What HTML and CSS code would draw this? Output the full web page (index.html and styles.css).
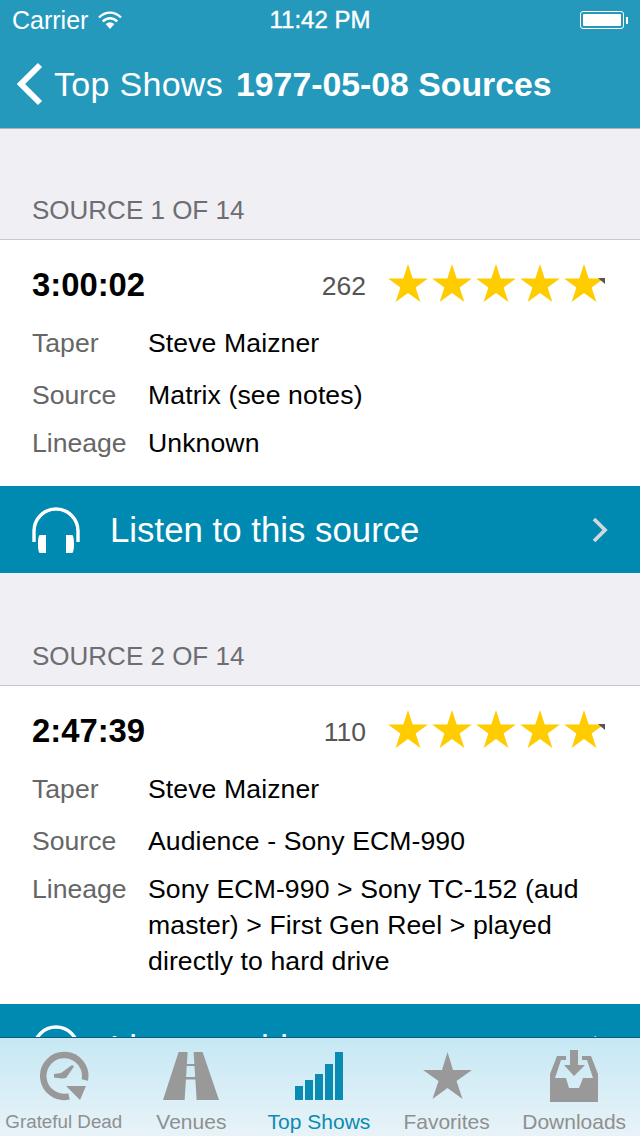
FILE: index.html
```html
<!DOCTYPE html>
<html lang="en">

<head>
    <meta charset="UTF-8">
    <title>1977-05-08 Sources</title>
    <link rel="stylesheet" href="styles.css">
</head>

<body>
    <svg class="defs" width="0" height="0">
        <defs>
            <symbol id="star" viewBox="0 0 40 38">
                <polygon points="20,0 24.7,14.5 40,14.5 27.6,23.5 32.4,38 20,29 7.6,38 12.4,23.5 0,14.5 15.3,14.5" />
            </symbol>
            <symbol id="headphones" viewBox="0 0 48 48">
                <path d="M2 36V25a22 22 0 0 1 44 0v11" fill="none" stroke="#fff" stroke-width="3.4" />
                <path d="M8 29h6v18H8C6.500 47 6 42 6 38S6.500 29 8 29zM40 29h-6v18h6c1.500 0 2-5 2-9S41.500 29 40 29z" fill="#fff" />
            </symbol>
            <symbol id="chevron" viewBox="0 0 16 26">
                <path d="M2 2l11 11L2 24" fill="none" stroke="#cfd8de" stroke-width="3.800" />
            </symbol>
        </defs>
    </svg>

    <header class="topbar">
        <div class="status">
            <div class="status-left">
                <span>Carrier</span>
                <svg class="wifi" viewBox="0 0 24 18" width="24" height="18">
                    <path d="M1 6.500C7.500 0 16.500 0 23 6.500M4.800 10.500c4.300-4.300 10.100-4.300 14.400 0M8.500 14c2.200-2 4.800-2 7 0" fill="none" stroke="#fff" stroke-width="2.400" />
                    <path d="M12 18l-3-3.500c1.800-1.300 4.200-1.300 6 0z" fill="#fff" />
                </svg>
            </div>
            <div class="status-time">11:42 PM</div>
            <div class="status-right">
                <div class="battery"><div class="battery-fill"></div></div>
                <div class="battery-tip"></div>
            </div>
        </div>
        <div class="navbar">
            <svg class="back" viewBox="0 0 27 44" width="27" height="44">
                <path d="M24 3L5 22l19 19" fill="none" stroke="#fff" stroke-width="6" />
            </svg>
            <span class="back-label">Top Shows</span>
            <span class="nav-title">1977-05-08 Sources</span>
        </div>
    </header>

    <main>
        <h2 class="section-title section-first">SOURCE 1 OF 14</h2>
        <section class="card">
            <div class="summary">
                <div class="duration">3:00:02</div>
                <div class="reviews">262</div>
                <div class="stars">
                    <svg class="star"><use href="#star" /></svg>
                    <svg class="star"><use href="#star" /></svg>
                    <svg class="star"><use href="#star" /></svg>
                    <svg class="star"><use href="#star" /></svg>
                    <svg class="star"><use href="#star" /></svg>
                    <div class="star-rest"></div>
                </div>
            </div>
            <div class="info"><div class="label">Taper</div><div class="value">Steve Maizner</div></div>
            <div class="info info-source"><div class="label">Source</div><div class="value">Matrix (see notes)</div></div>
            <div class="info info-lineage"><div class="label">Lineage</div><div class="value">Unknown</div></div>
        </section>
        <div class="listen">
            <svg class="headphones"><use href="#headphones" /></svg>
            <span class="listen-text">Listen to this source</span>
            <svg class="chevron"><use href="#chevron" /></svg>
        </div>

        <h2 class="section-title">SOURCE 2 OF 14</h2>
        <section class="card">
            <div class="summary">
                <div class="duration">2:47:39</div>
                <div class="reviews">110</div>
                <div class="stars">
                    <svg class="star"><use href="#star" /></svg>
                    <svg class="star"><use href="#star" /></svg>
                    <svg class="star"><use href="#star" /></svg>
                    <svg class="star"><use href="#star" /></svg>
                    <svg class="star"><use href="#star" /></svg>
                    <div class="star-rest"></div>
                </div>
            </div>
            <div class="info"><div class="label">Taper</div><div class="value">Steve Maizner</div></div>
            <div class="info info-source"><div class="label">Source</div><div class="value">Audience - Sony ECM-990</div></div>
            <div class="info info-lineage"><div class="label">Lineage</div><div class="value">Sony ECM-990 &gt; Sony TC-152 (aud master) &gt; First Gen Reel &gt; played directly to hard drive</div></div>
        </section>
        <div class="listen">
            <svg class="headphones"><use href="#headphones" /></svg>
            <span class="listen-text">Listen to this source</span>
            <svg class="chevron"><use href="#chevron" /></svg>
        </div>
    </main>

    <nav class="tabbar">
        <div class="tab">
            <svg class="tab-icon" viewBox="0 0 56 52">
                <path d="M48.800 30A21 21 0 1 0 33 46.400" fill="none" stroke="#999" stroke-width="6.500" />
                <polygon fill="#999" points="30,36 50,36 44,50" />
                <polygon fill="#999" points="18,24 25,23 36,15 38,16.500 30,28 26,28.500 18,27.500" />
            </svg>
            <span class="tab-label tab-label-small">Grateful Dead</span>
        </div>
        <div class="tab">
            <svg class="tab-icon" viewBox="0 0 56 52">
                <g fill="#999">
                    <polygon points="15.600,2 24.600,2 21.600,50 0,50" />
                    <polygon points="30.600,2 39.600,2 56,50 33.600,50" />
                    <rect x="22" y="14" width="11" height="2" />
                    <rect x="21" y="27" width="14" height="2.500" />
                </g>
            </svg>
            <span class="tab-label">Venues</span>
        </div>
        <div class="tab tab-active">
            <svg class="tab-icon" viewBox="0 0 56 52">
                <g fill="#0a8bb3">
                    <rect x="4" y="36" width="8" height="14" />
                    <rect x="14" y="30" width="8" height="20" />
                    <rect x="24" y="24" width="8" height="26" />
                    <rect x="34" y="14" width="8" height="36" />
                    <rect x="44" y="2" width="8" height="48" />
                </g>
            </svg>
            <span class="tab-label">Top Shows</span>
        </div>
        <div class="tab">
            <svg class="tab-icon" viewBox="0 0 56 52">
                <polygon fill="#999" points="28.500,2 34,20 53,20 37.500,31 43.500,49 28.500,38 13.500,49 19.500,31 4,20 23,20" />
            </svg>
            <span class="tab-label">Favorites</span>
        </div>
        <div class="tab">
            <svg class="tab-icon" viewBox="0 0 56 52">
                <g fill="#999">
                    <polygon points="11,6 20,6 20,10 15,10 9,28 20,28 23,38 33,38 37,28 47,28 41,10 36,10 36,6 45,6 52,24 52,52 4,52 4,24" />
                    <polygon points="24,0 32,0 32,15 39,15 28,26 18,15 24,15" />
                </g>
            </svg>
            <span class="tab-label">Downloads</span>
        </div>
    </nav>
</body>

</html>
```

FILE: styles.css
```css
body {
    position: relative;
    margin: 0;
    width: 640px;
    height: 1136px;
    overflow: hidden;
    font-family: "Liberation Sans", Arial, sans-serif;
    background-color: #efeff4;
    color: #000;
}

.defs {
    display: block;
}

.topbar {
    height: 128px;
    background-color: #2599bc;
    border-bottom: 1px solid #b2b2b2;
    color: #fff;
}

.status {
    display: flex;
    align-items: center;
    justify-content: space-between;
    height: 40px;
    padding: 0 12px;
    font-size: 25px;
}

.status-left {
    display: flex;
    align-items: center;
    gap: 10px;
    width: 200px;
}

.status-time {
    font-size: 24px;
    -webkit-text-stroke: 0.4px #fff;
}

.status-right {
    display: flex;
    align-items: center;
    justify-content: flex-end;
    width: 200px;
}

.battery {
    width: 38px;
    height: 12px;
    padding: 2px;
    border: 1px solid #fff;
    border-radius: 3px;
}

.battery-fill {
    height: 100%;
    background-color: #fff;
    border-radius: 1px;
}

.battery-tip {
    width: 2px;
    height: 7px;
    margin-left: 2px;
    background-color: #fff;
}

.navbar {
    display: flex;
    align-items: center;
    height: 88px;
    padding-left: 16px;
    font-size: 34px;
}

.back {
    margin-right: 11px;
}

.back-label {
    letter-spacing: 0.3px;
}

.nav-title {
    margin-left: 13px;
    font-size: 33.800px;
    font-weight: bold;
}

.section-title {
    margin: 0;
    padding: 68px 32px 14px;
    font-size: 26px;
    font-weight: normal;
    line-height: 30px;
    color: #6d6d72;
}

.section-first {
    padding-top: 66px;
}

.card {
    padding-bottom: 25px;
    background-color: #fff;
    border-top: 1px solid #c8c7cc;
}

.summary {
    display: flex;
    align-items: center;
    height: 80px;
    padding: 5px 32px 0;
}

.duration {
    flex: 1;
    font-size: 32.800px;
    font-weight: bold;
}

.reviews {
    margin-top: 2px;
    margin-right: 22px;
    font-size: 26.500px;
    color: #555;
}

.stars {
    position: relative;
    display: flex;
    gap: 4px;
    margin-top: -4px;
    margin-right: 4px;
}

.star {
    width: 40px;
    height: 38px;
    fill: #ffcc00;
}

.star-rest {
    position: absolute;
    right: -1px;
    top: 14px;
    width: 0;
    height: 0;
    border-top: 6px solid #555;
    border-left: 7px solid transparent;
}

.info {
    display: grid;
    grid-template-columns: 116px 1fr;
    padding: 0 32px;
    font-size: 26.6px;
    line-height: 36px;
}

.info-source {
    margin-top: 16px;
}

.info-lineage {
    margin-top: 12px;
}

.label {
    color: #666;
}

.value {
    letter-spacing: 0.1px;
}

.listen {
    display: flex;
    align-items: center;
    height: 87px;
    padding: 0 32px;
    background-color: #008ab1;
    color: #fff;
    font-size: 34.800px;
}

.headphones {
    width: 48px;
    height: 48px;
    margin-right: 30px;
}

.listen-text {
    flex: 1;
}

.chevron {
    width: 16px;
    height: 26px;
}

.tabbar {
    position: absolute;
    left: 0;
    right: 0;
    bottom: 0;
    display: flex;
    height: 98px;
    padding-right: 2px;
    background: linear-gradient(#c6e8f4, #e8f3f8);
    border-top: 1px solid #0b5f7c;
}

.tab {
    display: flex;
    flex: 1 1 0;
    flex-direction: column;
    align-items: center;
    justify-content: flex-end;
    white-space: nowrap;
    font-size: 21px;
    line-height: 28px;
    color: #8f8f8f;
}

.tab-label-small {
    font-size: 18.800px;
}

.tab-active {
    color: #0a8bb3;
}

.tab-icon {
    width: 56px;
    height: 52px;
    margin-bottom: 6px;
}
```
